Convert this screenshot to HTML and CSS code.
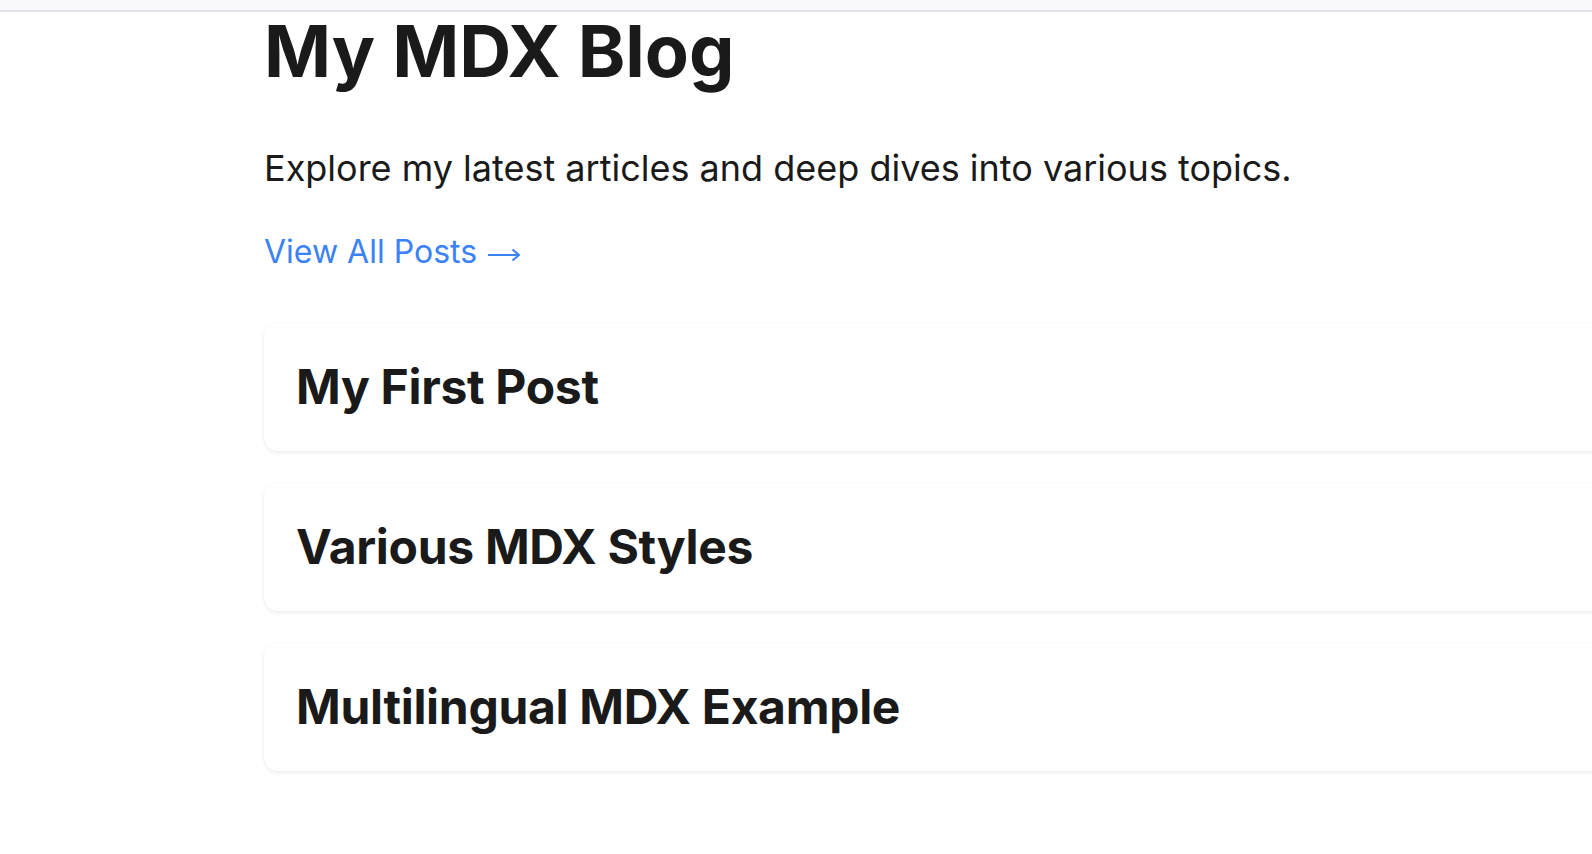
FILE: index.html
```html
<!DOCTYPE html>
<html lang="en">
<head>
<meta charset="utf-8">
<title>My MDX Blog</title>
<link rel="stylesheet" href="styles.css">
</head>
<body>
<header class="topbar"></header>
<main class="container">
  <h1 class="title">My MDX Blog</h1>
  <p class="lead">Explore my latest articles and deep dives into various topics.</p>
  <div class="link-row"><a class="all-link" href="#">View All Posts <svg class="arrow" width="32" height="16" viewBox="0 0 32 16" aria-hidden="true"><path d="M0 8H31M24.5 2.5L31 8L24.5 13.5" fill="none" stroke="currentColor" stroke-width="2" stroke-linecap="butt" stroke-linejoin="miter"/></svg></a></div>
  <ul class="posts">
    <li class="card"><h2 class="card-title">My First Post</h2></li>
    <li class="card"><h2 class="card-title">Various MDX Styles</h2></li>
    <li class="card"><h2 class="card-title">Multilingual MDX Example</h2></li>
  </ul>
</main>
</body>
</html>
```

FILE: styles.css
```css
html, body {
  margin: 0;
  padding: 0;
  background: #ffffff;
  overflow: hidden;
}
body {
  font-family: Inter, "Noto Sans", sans-serif;
  color: #1a1a1a;
  width: 1592px;
  height: 854px;
}
.topbar {
  height: 10px;
  background: #f9f9fd;
  border-bottom: 2px solid #e2e2ea;
}
.container {
  padding-left: 264px;
  width: 1400px;
}
.title {
  margin: 3px 0 0;
  font-size: 72px;
  line-height: 72px;
  font-weight: 700;
}
.lead {
  margin: 54px 0 0;
  font-size: 36px;
  line-height: 54px;
  font-weight: 400;
}
.link-row {
  margin-top: 33px;
}
.all-link {
  font-size: 32px;
  line-height: 48px;
  color: #3b82f6;
  text-decoration: none;
}
.arrow {
  vertical-align: 0;
  margin-left: 2px;
}
.posts {
  list-style: none;
  margin: 47px 0 0;
  padding: 0;
  display: flex;
  flex-direction: column;
  gap: 32px;
  width: 1400px;
}
.card {
  background: #fff;
  border-radius: 14px;
  padding: 32px;
  box-shadow: 0 2px 4px rgba(0,0,0,0.07), 0 0 2px rgba(0,0,0,0.04);
}
.card-title {
  margin: 0;
  font-size: 48px;
  line-height: 64px;
  font-weight: 700;
  letter-spacing: -0.3px;
}
```
